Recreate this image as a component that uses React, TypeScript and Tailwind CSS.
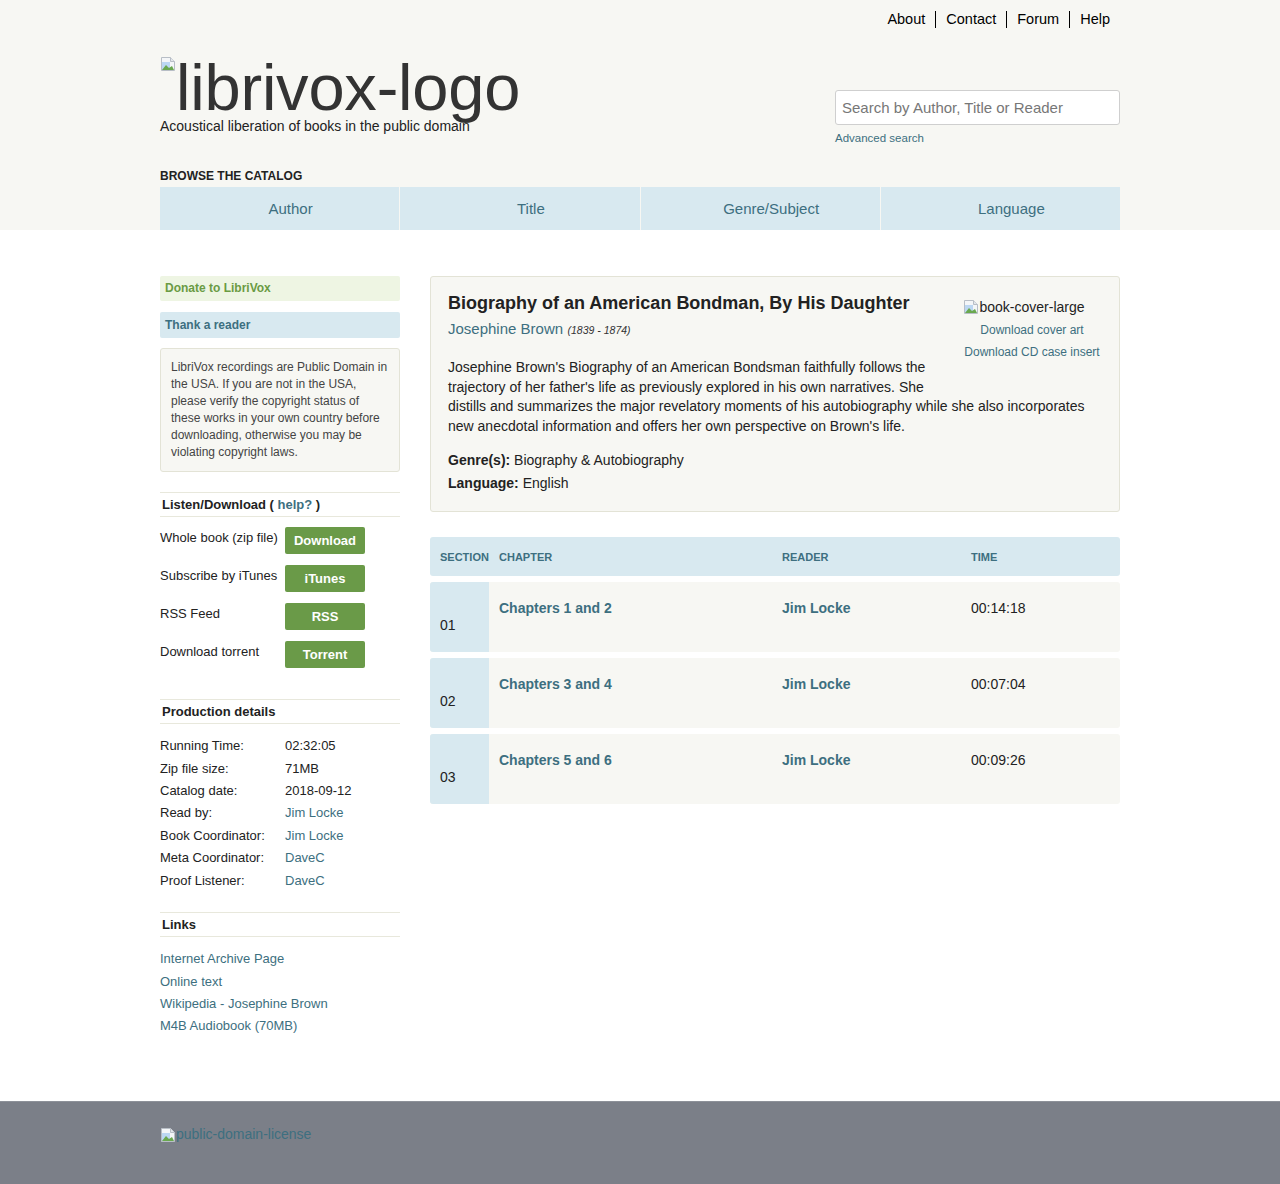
import React from 'react';

const teal = 'text-[#3d6f80]';

function BrokenImage({ className = '' }: { className?: string }) {
  return (
    <svg className={className} width="16" height="16" viewBox="0 0 16 16">
      <path d="M1.5 1.5h9l4 4v9h-13z" fill="#f4f6f8" stroke="#b8bec6" />
      <path d="M10.5 1.5v4h4" fill="#e2e6ea" stroke="#b8bec6" />
      <path d="M2 6h8v8H2z" fill="#bcd7f2" />
      <path d="M2 14l4-5 3 3 3-2 2 4z" fill="#6aa84f" />
    </svg>
  );
}

function SideHeading({ children }: { children: React.ReactNode }) {
  return (
    <div className="border-y border-[#e8e8dc] py-[4px] pl-[2px] text-[13px] font-bold leading-[15px] text-[#222]">
      {children}
    </div>
  );
}

const downloads = [
  { label: 'Whole book (zip file)', btn: 'Download' },
  { label: 'Subscribe by iTunes', btn: 'iTunes' },
  { label: 'RSS Feed', btn: 'RSS' },
  { label: 'Download torrent', btn: 'Torrent' },
];

const details: { k: string; v: string; link?: boolean }[] = [
  { k: 'Running Time:', v: '02:32:05' },
  { k: 'Zip file size:', v: '71MB' },
  { k: 'Catalog date:', v: '2018-09-12' },
  { k: 'Read by:', v: 'Jim Locke', link: true },
  { k: 'Book Coordinator:', v: 'Jim Locke', link: true },
  { k: 'Meta Coordinator:', v: 'DaveC', link: true },
  { k: 'Proof Listener:', v: 'DaveC', link: true },
];

const links = ['Internet Archive Page', 'Online text', 'Wikipedia - Josephine Brown', 'M4B Audiobook (70MB)'];

const chapters = [
  { n: '01', title: 'Chapters 1 and 2', reader: 'Jim Locke', time: '00:14:18' },
  { n: '02', title: 'Chapters 3 and 4', reader: 'Jim Locke', time: '00:07:04' },
  { n: '03', title: 'Chapters 5 and 6', reader: 'Jim Locke', time: '00:09:26' },
];

export default function App() {
  return (
    <div className="min-h-[1184px] flex flex-col bg-white font-['Liberation_Sans',Arial,sans-serif] text-[#333]">
      <header className="bg-[#f7f7f3]">
        <div className="mx-auto w-[960px]">
          <nav className="flex justify-end pt-[11px] pr-[10px] text-[14.5px] text-black leading-[17px]">
            {['About', 'Contact', 'Forum', 'Help'].map((t, i) => (
              <span key={t} className={i === 0 ? 'pr-[10px]' : 'border-l border-black px-[10px] last:pr-0'}>
                {t}
              </span>
            ))}
          </nav>
          <div className="flex justify-between">
            <div className="pt-[31px]">
              <div className="flex items-start">
                <BrokenImage className="mt-[-3px]" />
                <span className="text-[65px] leading-[58px] text-[#333] tracking-[-0.2px]">librivox-logo</span>
              </div>
              <div className="mt-[1px] text-[14px] leading-[17px] text-[#222]">Acoustical liberation of books in the public domain</div>
            </div>
            <div className="w-[285px] pt-[62px]">
              <div className="h-[35px] rounded-[3px] border border-[#cfcfcf] bg-white px-[6px] text-[15px] leading-[33px] text-[#777]">
                Search by Author, Title or Reader
              </div>
              <div className={`mt-[5px] text-[11.5px] ${teal}`}>Advanced search</div>
            </div>
          </div>
          <div className="mt-[22px] text-[12px] font-bold text-[#222] leading-[14px]">BROWSE THE CATALOG</div>
          <div className="mt-[4px] grid grid-cols-4 gap-px">
            {['Author', 'Title', 'Genre/Subject', 'Language'].map((t) => (
              <div key={t} className={`h-[43px] bg-[#d8e9f0] pl-[22px] text-center text-[15px] leading-[43px] ${teal}`}>
                {t}
              </div>
            ))}
          </div>
        </div>
      </header>

      <main className="mx-auto flex w-[960px] gap-[30px] pt-[46px] pb-[63px]">
        <aside className="w-[240px] shrink-0">
          <div className="rounded-[2px] bg-[#eef5e3] px-[5px] text-[12px] font-bold leading-[25px] text-[#6a9b43]">Donate to LibriVox</div>
          <div className={`mt-[11px] rounded-[2px] bg-[#d8e9f0] px-[5px] text-[12px] font-bold leading-[26px] ${teal}`}>Thank a reader</div>
          <div className="mt-[10px] rounded-[3px] border border-[#e3e3d6] bg-[#f7f7f3] px-[10px] pt-[10px] pb-[10px] text-[12px] leading-[17px] text-[#444]">
            LibriVox recordings are Public Domain in the USA. If you are not in the USA, please verify the copyright status of these works in your own country before downloading, otherwise you may be violating copyright laws.
          </div>

          <div className="mt-[20px]">
            <SideHeading>
              Listen/Download ( <span className={teal}>help?</span> )
            </SideHeading>
          </div>
          <div className="mt-[10px] flex flex-col gap-[11px]">
            {downloads.map((d) => (
              <div key={d.btn} className="flex items-start">
                <span className="w-[125px] text-[13px] leading-[22px] text-[#222]">{d.label}</span>
                <span className="h-[27px] w-[80px] rounded-[2px] bg-[#6a9a48] text-center text-[13px] font-bold leading-[27px] text-white">
                  {d.btn}
                </span>
              </div>
            ))}
          </div>

          <div className="mt-[31px]">
            <SideHeading>Production details</SideHeading>
          </div>
          <div className="mt-[11px] text-[13px] leading-[22.4px]">
            {details.map((d) => (
              <div key={d.k} className="flex">
                <span className="w-[125px] text-[#222]">{d.k}</span>
                <span className={d.link ? teal : 'text-[#222]'}>{d.v}</span>
              </div>
            ))}
          </div>

          <div className="mt-[20px]">
            <SideHeading>Links</SideHeading>
          </div>
          <div className={`mt-[11px] text-[13px] leading-[22.4px] ${teal}`}>
            {links.map((l) => (
              <div key={l}>{l}</div>
            ))}
          </div>
        </aside>

        <section className="flex-1">
          <div className="rounded-[3px] border border-[#e3e3d6] bg-[#f7f7f3] pt-[15px] pr-[17px] pb-[16px] pl-[17px] flow-root">
            <div className="float-right mb-[28px] ml-[20px] flex w-[140px] flex-col items-center pt-[3px] text-[12px] leading-[22px]">
              <div className="flex items-center pr-[16px] text-[14px] text-[#222] leading-[24px]">
                <BrokenImage />
                <span>book-cover-large</span>
              </div>
              <div className={teal}>Download cover art</div>
              <div className={teal}>Download CD case insert</div>
            </div>
            <h1 className="text-[18px] font-bold leading-[22px] text-[#222]">Biography of an American Bondman, By His Daughter</h1>
            <div className="mt-[6px] leading-[18px]">
              <span className={`text-[15px] ${teal}`}>Josephine Brown</span>{' '}
              <span className="text-[10.5px] italic text-[#333]">(1839 - 1874)</span>
            </div>
            <p className="mt-[19px] text-[14px] leading-[19.5px] text-[#222]">
              Josephine Brown's Biography of an American Bondsman faithfully follows the trajectory of her father's life as previously explored in his own narratives. She distills and summarizes the major revelatory moments of his autobiography while she also incorporates new anecdotal information and offers her own perspective on Brown's life.
            </p>
            <div className="mt-[13px] text-[14px] leading-[23px] text-[#222]">
              <div>
                <b>Genre(s):</b> Biography &amp; Autobiography
              </div>
              <div>
                <b>Language:</b> English
              </div>
            </div>
          </div>

          <div className="mt-[25px]">
            <div className={`flex h-[39px] items-center rounded-[3px] bg-[#d8e9f0] text-[11px] font-bold ${teal}`}>
              <span className="w-[69px] pl-[10px]">SECTION</span>
              <span className="w-[283px]">CHAPTER</span>
              <span className="w-[189px]">READER</span>
              <span>TIME</span>
            </div>
            <div className="mt-[6px] flex flex-col gap-[6px]">
              {chapters.map((c) => (
                <div key={c.n} className="flex h-[70px] overflow-hidden rounded-[3px] bg-[#f7f7f3] text-[14px]">
                  <div className="flex w-[59px] items-end bg-[#d8e9f0] pb-[16px] pl-[10px] text-[#222]">{c.n}</div>
                  <div className={`w-[293px] pt-[16px] pl-[10px] font-bold ${teal}`}>{c.title}</div>
                  <div className={`w-[189px] pt-[16px] font-bold ${teal}`}>{c.reader}</div>
                  <div className="pt-[16px] text-[#222]">{c.time}</div>
                </div>
              ))}
            </div>
          </div>
        </section>
      </main>

      <footer className="mt-auto h-[83px] border-t border-[#8d9199] bg-[#7b7f88]">
        <div className="mx-auto flex w-[960px] items-center pt-[22px] text-[14px] text-[#3d6f80]">
          <BrokenImage />
          <span>public-domain-license</span>
        </div>
      </footer>
    </div>
  );
}
